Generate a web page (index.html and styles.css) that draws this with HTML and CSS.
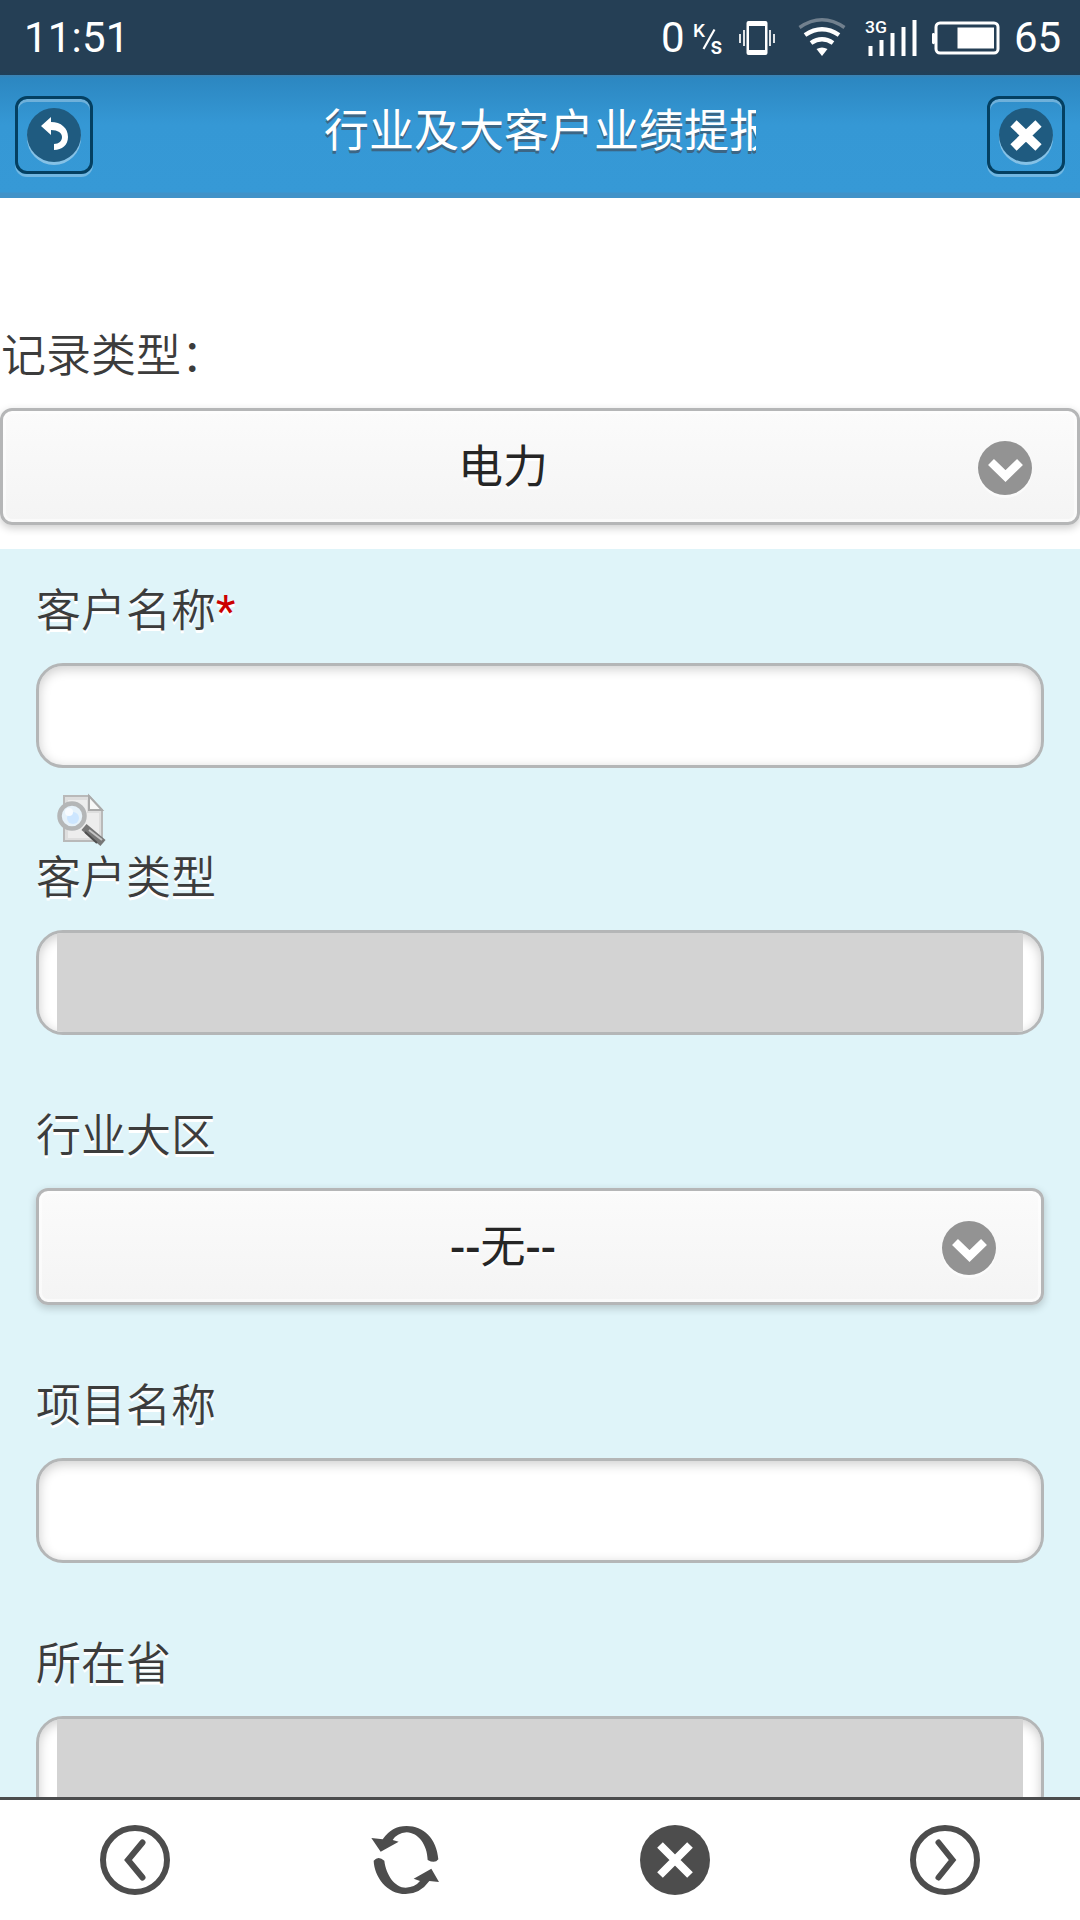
FILE: index.html
```html
<!DOCTYPE html>
<html lang="zh-CN">
<head>
<meta charset="utf-8">
<title>行业及大客户业绩提报</title>
<link rel="stylesheet" href="styles.css">
</head>
<body>
<div class="status">
  <span class="clock">11:51</span>
  <div class="indicators">
    <span class="speed">0</span>
    <svg class="unit" width="30" height="36" viewBox="0 0 30 36"><text x="0" y="17" font-size="19">K</text><path d="M21.500 9.500L10.500 29" stroke="#fff" stroke-width="2.200" fill="none"/><text x="17.500" y="34" font-size="23">s</text></svg>
    <svg class="vibrate" width="36" height="36" viewBox="0 0 36 36"><path fill="#fff" fill-rule="evenodd" d="M9.500 1h17a2 2 0 0 1 2 2v30a2 2 0 0 1-2 2h-17a2 2 0 0 1-2-2V3a2 2 0 0 1 2-2zM10 6v24h16V6z"/><path d="M1 14v9M5 10v16M31 10v16M35 14v9" stroke="#fff" stroke-width="1.700"/></svg>
    <svg class="wifi" width="48" height="40" viewBox="0 0 48 40"><g fill="none" stroke="#fff"><path d="M1.500 9.500Q24-6 46.500 9.500" stroke="#71808e" stroke-width="3.500"/><path d="M7 17Q24 5.500 41 17" stroke-width="4.500"/><path d="M13 25Q24 17.500 35 25" stroke-width="4.500"/></g><path d="M18.500 31Q24 28 29.500 31L24 38z" fill="#fff"/></svg>
    <svg class="signal" width="52" height="36" viewBox="0 0 52 36"><text x="-1" y="13" font-size="16" textLength="22" lengthAdjust="spacingAndGlyphs">3G</text><path d="M4.500 36V26M15.500 36V20M26.500 36V13M37.500 36V7M48.500 36V0" stroke="#fff" stroke-width="4"/></svg>
    <svg class="battery" width="69" height="34" viewBox="0 0 69 34"><rect x="4" y="2" width="62" height="30" rx="4" fill="none" stroke="#fff" stroke-width="3"/><path d="M0 14a1.500 1.500 0 0 1 3-1v9a1.500 1.500 0 0 1-3-1z" fill="#fff"/><path d="M25.500 6.500h36.500v21H25.500z" fill="#fff"/></svg>
    <span class="level">65</span>
  </div>
</div>
<header class="header">
  <button class="head-btn" aria-label="返回"><svg width="54" height="54" viewBox="0 0 54 54"><path d="M14 18L24 9V14C34 14 41 20 41 29C41 37 35 42 27 42V36C32 36 35 33 35 29C35 25 31 22 24 22V27z" fill="#fff"/></svg></button>
  <h1 class="title">行业及大客户业绩提报</h1>
  <button class="head-btn" aria-label="关闭"><svg width="54" height="54" viewBox="0 0 54 54"><path d="M14.500 15.500L39.500 39.500M39.500 15.500L14.500 39.500" stroke="#fff" stroke-width="9"/></svg></button>
</header>
<main class="content">
  <section class="record">
    <label class="label">记录类型：</label>
    <div class="select"><span class="value">电力</span><svg class="arrow" width="54" height="54" viewBox="0 0 54 54"><circle cx="27" cy="27" r="27" fill="#939393"/><path d="M13 21L27.500 35L42 21" fill="none" stroke="#fff" stroke-width="8.500"/></svg></div>
  </section>
  <section class="form">
    <div class="field lookup-field">
      <label class="label">客户名称<span class="required">*</span></label>
      <div class="input"></div>
      <svg class="lookup" width="51" height="53" viewBox="0 0 51 53">
        <path d="M7 2H32L45 16V47H7z" fill="#dedede" stroke="#b9b9b9" stroke-width="2"/>
        <path d="M11 6H30V19H42V44H11z" fill="#ededed"/>
        <path d="M32 2V16H45z" fill="#f8f8f8" stroke="#aaa" stroke-width="2"/>
        <path d="M27 33L46 49" stroke="#777" stroke-width="8"/><path d="M32 36L45 46" stroke="#c5c5c5" stroke-width="2"/><path d="M28 38L40 49" stroke="#4f4f4f" stroke-width="2"/>
        <circle cx="15" cy="22" r="12.500" fill="#e6f2fa" stroke="#b4b6b7" stroke-width="4.500"/><circle cx="16" cy="24" r="6" fill="#cde6ff"/><circle cx="12" cy="18" r="4" fill="#f7fbff"/>
      </svg>
    </div>
    <div class="field">
      <label class="label">客户类型</label>
      <div class="input"><div class="readonly"></div></div>
    </div>
    <div class="field">
      <label class="label">行业大区</label>
      <div class="select"><span class="value"><b>--</b>无<b>--</b></span><svg class="arrow" width="54" height="54" viewBox="0 0 54 54"><circle cx="27" cy="27" r="27" fill="#939393"/><path d="M13 21L27.500 35L42 21" fill="none" stroke="#fff" stroke-width="8.500"/></svg></div>
    </div>
    <div class="field">
      <label class="label">项目名称</label>
      <div class="input"></div>
    </div>
    <div class="field">
      <label class="label">所在省</label>
      <div class="input"><div class="readonly"></div></div>
    </div>
  </section>
</main>
<nav class="toolbar">
  <svg width="72" height="72" viewBox="0 0 72 72"><g fill="none" stroke="#4d4d4d"><circle cx="36" cy="36" r="32" stroke-width="6"/><path d="M43.500 18.500L29 36L43.500 53.500" stroke-width="6" stroke-linecap="round"/></g></svg>
  <svg width="72" height="72" viewBox="87 132 216 216"><g fill="#4d4d4d"><path d="M128 178Q155 138 200 138C250 138 290 175 295 238Q285 252 263 240C262 195 235 158 200 157Q170 160 158 180L176 185L122 215L94 174z"/><path d="M101 242Q115 226 133 242C138 285 165 323 197 323Q225 322 240 303L221 296L274 266L297 306L268 303Q240 342 197 342C140 342 103 290 101 242z"/></g></svg>
  <svg width="72" height="72" viewBox="0 0 72 72"><circle cx="36" cy="36" r="35" fill="#4d4d4d"/><path d="M21 21L51 51M51 21L21 51" stroke="#fff" stroke-width="8"/></svg>
  <svg width="72" height="72" viewBox="0 0 72 72"><g fill="none" stroke="#4d4d4d"><circle cx="36" cy="36" r="32" stroke-width="6"/><path d="M29.500 18.500L43.500 36L29.500 53.500" stroke-width="6" stroke-linecap="round"/></g></svg>
</nav>
</body>
</html>
```

FILE: styles.css
```css
* { box-sizing: border-box; }

body {
  margin: 0;
  width: 1080px;
  height: 1920px;
  display: flex;
  flex-direction: column;
  overflow: hidden;
  background: #fff;
  color: #3c3c3c;
  font-family: Roboto, "Noto Sans CJK SC", sans-serif;
  font-size: 45px;
}

svg { display: block; flex: none; overflow: visible; }

.status {
  flex: none;
  height: 75px;
  padding: 0 19px 0 24px;
  display: flex;
  justify-content: space-between;
  align-items: center;
  background: linear-gradient(#253f55 70px, #1f405a);
  color: #fff;
  font-size: 42px;
  line-height: 75px;
}
.clock { letter-spacing: .2px; }
.indicators { display: flex; align-items: center; }
.indicators text { fill: #fff; font-family: Roboto, sans-serif; font-weight: 500; }
.speed { width: 32px; }
.unit { margin-right: 16px; }
.vibrate { margin-right: 23px; }
.wifi { margin-right: 20px; }
.signal { margin-right: 14px; }
.battery { margin-right: 13px; }
.level { width: 47px; }

.header {
  flex: none;
  height: 123px;
  padding: 21px 15px 0;
  display: flex;
  justify-content: space-between;
  align-items: flex-start;
  background: linear-gradient(#3d82b1 0, #2c87c1 3px, #3598d5 50px, #3699d6 117px, #4092c8 118px);
}
.head-btn {
  width: 78px;
  height: 78px;
  padding: 0;
  display: grid;
  place-items: center;
  border: 3px solid #044062;
  border-radius: 12px;
  background: transparent;
  box-shadow: 0 3px 0 rgba(255, 255, 255, .3), inset 0 3px 0 rgba(255, 255, 255, .3);
}
.head-btn svg { border-radius: 50%; background: #1f5b80; box-shadow: 0 3px 0 rgba(255, 255, 255, .4); }
.title {
  margin: 0;
  width: 432px;
  overflow: hidden;
  white-space: nowrap;
  color: #fff;
  font-size: 45px;
  font-weight: 400;
  line-height: 72px;
  text-shadow: 0 3px 0 #3c6685;
}

.content { flex: 1; min-height: 0; overflow: hidden; }
.record { padding: 124px 0 24px; }
.form { padding: 28px 36px 0; background: #dff4f9; }
.field { margin-bottom: 67px; }
.lookup-field { height: 267px; margin-bottom: 0; }

.label {
  display: block;
  margin-bottom: 16px;
  line-height: 70px;
  font-family: Roboto, "Noto Sans CJK SC DemiLight", "Noto Sans CJK SC", sans-serif;
  font-weight: 350;
  text-shadow: 0 3px 0 #fff;
}
.record .label { padding-left: 1px; }
.required { color: #c00; font-weight: 400; }

.input {
  height: 105px;
  padding: 0 18px;
  border: 3px solid #b4b6b7;
  border-radius: 27px;
  background: #fff;
  box-shadow: inset 0 3px 12px rgba(0, 0, 0, .2);
  overflow: hidden;
}
.readonly { height: 100%; background: #d3d3d3; }
.lookup { margin: 26px 0 0 21px; }

.select {
  height: 117px;
  padding: 3px 45px 0 25px;
  display: flex;
  align-items: center;
  border: 3px solid #b5b6b7;
  border-radius: 12px;
  background: linear-gradient(#fbfbfb, #f4f4f4);
  box-shadow: 0 3px 9px rgba(0, 0, 0, .2), inset 0 0 0 3px rgba(255, 255, 255, .5);
}
.value {
  flex: 1;
  text-align: center;
  color: #262626;
  font-weight: 400;
  line-height: 60px;
  text-shadow: 0 3px 0 #fff;
}
.value b { font-weight: 500; }
.arrow { border-radius: 50%; box-shadow: 0 3px 0 rgba(255, 255, 255, .6); }

.toolbar {
  flex: none;
  height: 123px;
  display: grid;
  grid-template-columns: repeat(4, 1fr);
  place-items: center;
  border-top: 3px solid #4b4c4d;
  background: #fff;
}
```
